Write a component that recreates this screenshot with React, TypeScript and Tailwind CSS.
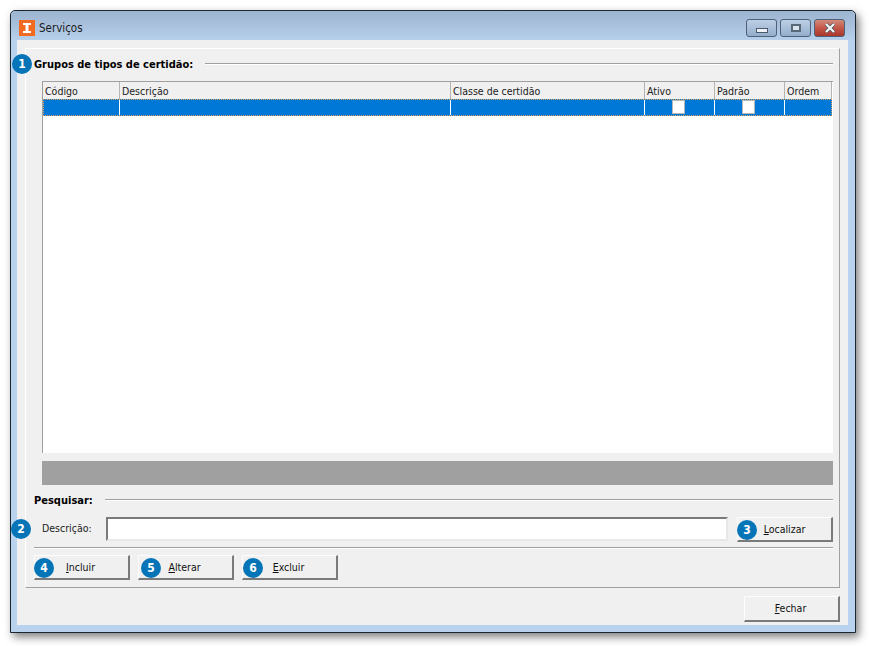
import React from "react";

const font = { fontFamily: '"DejaVu Sans Condensed", "DejaVu Sans", "Liberation Sans", sans-serif' };

function Badge({ n, className }: { n: number; className: string }) {
  return (
    <span className={"absolute z-10 flex h-5 w-5 items-center justify-center rounded-full bg-[#0575b8] text-[12px] font-bold text-white " + className}>
      {n}
    </span>
  );
}

function Btn({ label, u, className, textClass, badge, badgeClass }: { label: string; u: string; className: string; textClass?: string; badge?: number; badgeClass?: string }) {
  return (
    <div className={"relative flex items-center justify-center border border-t-[#fdfdfd] border-l-[#fdfdfd] border-r-[#7a7a7a] border-b-[#7a7a7a] border-r-2 border-b-2 bg-[#f0f0f0] pr-[2px] pt-[1px] text-[10.5px] text-[#111] " + className}>
      {badge ? <Badge n={badge} className={badgeClass ?? ""} /> : null}
      <span className={textClass}>
        <span className="underline">{u}</span>
        {label}
      </span>
    </div>
  );
}

function Heading({ text, className }: { text: string; className: string }) {
  return (
    <div className={"flex h-4 items-center " + className}>
      <span className="pt-[2px] text-[11px] font-bold text-black">{text}</span>
      <div className="ml-3 flex-1 border-t border-b border-t-[#a0a0a0] border-b-white" />
    </div>
  );
}

const cols = ["Código", "Descrição", "Classe de certidão", "Ativo", "Padrão", "Ordem"];

function CheckBox() {
  return <div className="mr-[2px] h-[14px] w-[13px] border border-[#b8b8b8] bg-white" />;
}

function WinBtn({ children, className }: { children: React.ReactNode; className: string }) {
  return <div className={"flex h-[18px] w-[31px] items-center justify-center rounded-[3px] border border-[#4d6179] " + className}>{children}</div>;
}

export default function App() {
  return (
    <div style={font} className="h-[646px] w-[869px] bg-white pl-[10px] pt-[10px]">
      <div className="flex h-[623px] w-[846px] flex-col rounded-t-[5px] border border-[#1c2630] bg-[#b9d3ee] shadow-[3px_4px_8px_rgba(0,0,0,0.5)]">
        {/* title bar */}
        <div className="flex h-[29px] shrink-0 items-center rounded-t-[5px] bg-gradient-to-b from-[#9db4d0] to-[#b6cfea] pl-2 pr-[10px] pt-[5px]">
          <div className="flex h-4 w-4 items-center justify-center bg-[#f26b21]">
            <svg width="10" height="10" viewBox="0 0 10 10"><path d="M1 0h8v2H6.500v6H9v2H1V8h2.500V2H1z" fill="#fff" /></svg>
          </div>
          <span className="ml-1 pt-[2px] text-[11.5px] text-[#1a1a1a]">Serviços</span>
          <div className="ml-auto flex gap-[3px]">
            <WinBtn className="bg-gradient-to-b from-[#bccfe4] via-[#a9bfd9] to-[#93adcb]">
              <div className="mt-1 h-[5px] w-[12px] border border-[#4a5a6c] bg-[#eef2f6]" />
            </WinBtn>
            <WinBtn className="bg-gradient-to-b from-[#bccfe4] via-[#a9bfd9] to-[#93adcb]">
              <div className="h-[8px] w-[10px] border-2 border-[#5a6978] bg-[#d9e3ee]" />
            </WinBtn>
            <WinBtn className="bg-gradient-to-b from-[#d2897a] via-[#c4574a] to-[#a8352b]">
              <svg width="12" height="10" viewBox="0 0 12 10">
                <path d="M2 1l8 8M10 1L2 9" stroke="#4a5561" strokeWidth="3.600" />
                <path d="M2 1l8 8M10 1L2 9" stroke="#f4f6f8" strokeWidth="2.200" />
              </svg>
            </WinBtn>
          </div>
        </div>
        {/* content */}
        <div className="ml-[6px] mr-[7px] flex h-[585px] flex-col bg-[#f0f0f0] px-2 pt-2">
          <div className="relative flex h-[540px] flex-col border-t border-l border-r border-b border-t-white border-l-white border-r-[#a0a0a0] border-b-[#a0a0a0] pl-2 pr-[6px] pt-[7px]">
            <Badge n={1} className="left-[-14px] top-[5px]" />
            <Heading text="Grupos de tipos de certidão:" className="" />
            <div className="ml-2 mt-[9px] flex h-[372px] flex-col border-l border-t border-l-[#a0a0a0] border-t-[#a0a0a0] bg-white">
              <div className="grid h-[17px] w-[789px] grid-cols-[76px_331px_194px_70px_70px_48px] border-r border-r-[#b5b5b5] bg-[#f0f0f0] text-[10.5px] text-[#222]">
                {cols.map((c, i) => (
                  <div key={c} className={"flex items-center pl-[2px] pt-[2px] " + (i > 0 ? "border-l border-l-[#b5b5b5]" : "")}>{c}</div>
                ))}
              </div>
              <div className="grid h-[17px] w-[789px] grid-cols-[75px_331px_194px_70px_70px_47px] border border-dotted border-[#e3a25c] bg-[#0078d7]">
                {cols.map((c, i) => (
                  <div key={c} className={"flex items-start justify-center " + (i > 0 ? "border-l border-l-white" : "")}>
                    {i === 3 || i === 4 ? <CheckBox /> : null}
                  </div>
                ))}
              </div>
            </div>
            <div className="ml-2 mt-2 h-6 bg-[#a0a0a0]" />
            <Heading text="Pesquisar:" className="mt-[7px]" />
            <div className="relative mt-[9px] flex h-[25px] items-start">
              <Badge n={2} className="left-[-23px] top-[2px]" />
              <span className="ml-2 mt-[4px] w-[64px] text-[10.5px] text-[#222]">Descrição:</span>
              <div className="h-6 w-[622px] border-2 border-t-[#7a7a7a] border-l-[#7a7a7a] border-r-[#e8e8e8] border-b-[#e8e8e8] bg-white" />
              <Btn label="ocalizar" u="L" badge={3} badgeClass="left-[-1px] top-[2px]" className="ml-[9px] h-[25px] w-[96px]" textClass="ml-[2px]" />
            </div>
            <div className="mt-[5px] border-t border-b border-t-[#a0a0a0] border-b-white" />
            <div className="mt-[6px] flex gap-2">
              <Btn label="ncluir" u="I" badge={4} badgeClass="left-[-1px] top-[2px]" className="h-[25px] w-[96px]" />
              <Btn label="lterar" u="A" badge={5} badgeClass="left-[2px] top-[2px]" className="h-[25px] w-[96px]" />
              <Btn label="xcluir" u="E" badge={6} badgeClass="left-0 top-[2px]" className="h-[25px] w-[96px]" />
            </div>
          </div>
          <div className="mt-2 flex justify-end">
            <Btn label="echar" u="F" className="h-[26px] w-[96px]" />
          </div>
        </div>
      </div>
    </div>
  );
}
